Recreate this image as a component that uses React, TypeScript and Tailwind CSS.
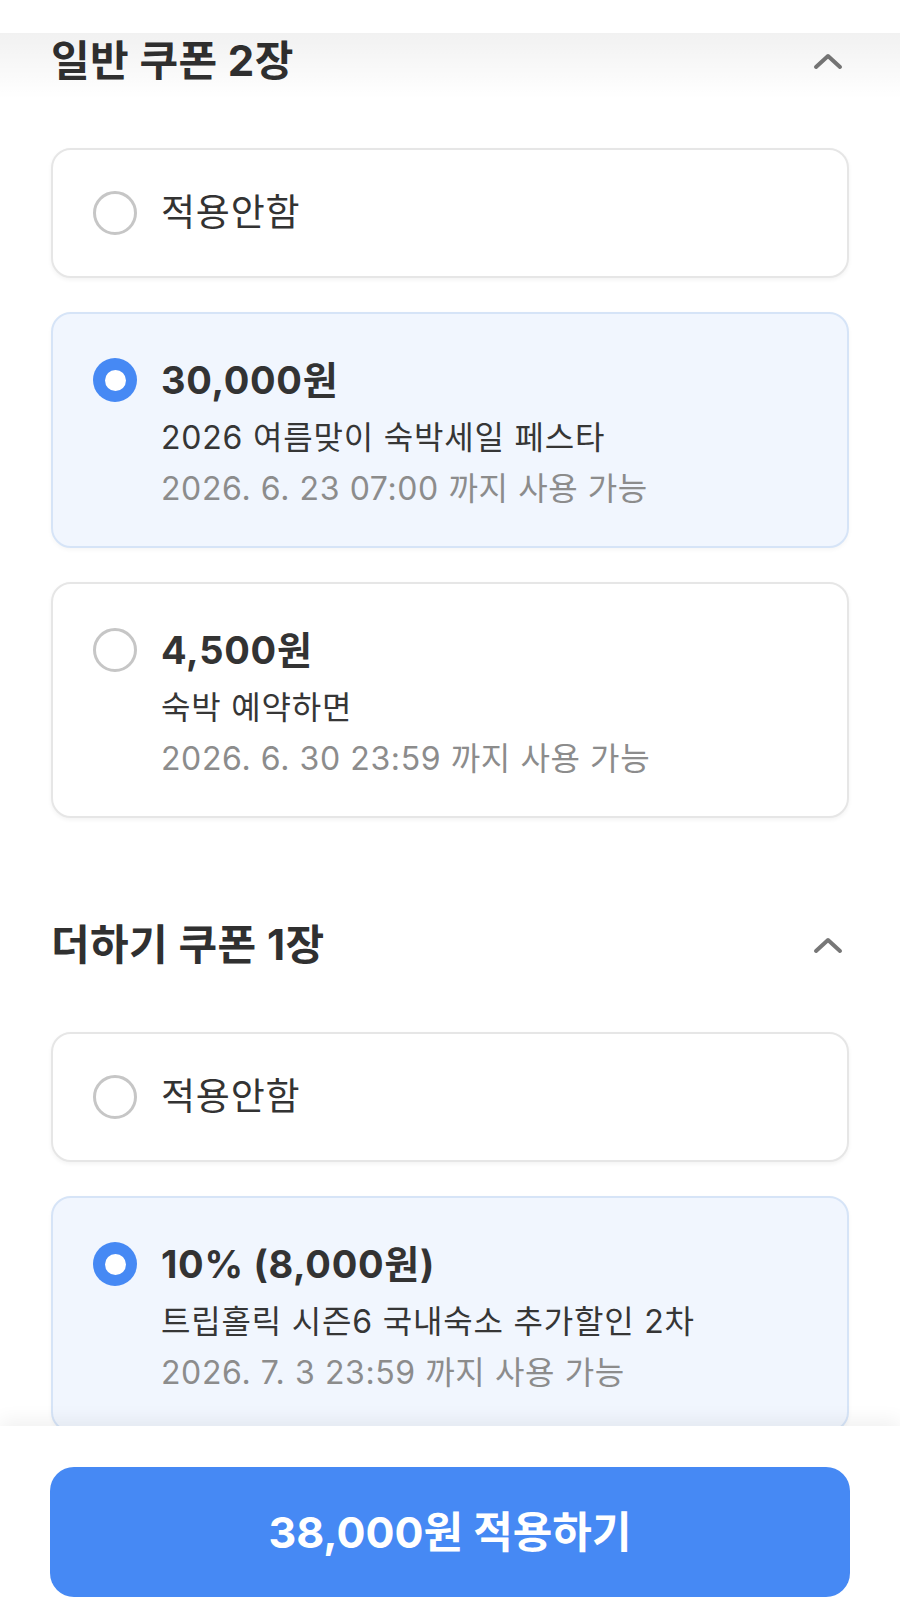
import React from "react";

type Coupon = {
  id: string;
  title?: string;
  name?: string;
  expiry?: string;
  selected?: boolean;
};

const Chevron = () => (
  <svg width="32" height="20" viewBox="0 0 32 20" className="mr-[5px]" aria-hidden>
    <path d="M4 16 L16 5 L28 16" fill="none" stroke="#777777" strokeWidth="4" strokeLinecap="round" strokeLinejoin="round" />
  </svg>
);

const Radio = ({ selected }: { selected?: boolean }) =>
  selected ? (
    <div className="w-[44px] h-[44px] rounded-full bg-[#4689f4] flex items-center justify-center shrink-0">
      <div className="w-[21px] h-[21px] rounded-full bg-white" />
    </div>
  ) : (
    <div className="w-[44px] h-[44px] rounded-full border-[3px] border-[#c6c6c6] bg-white shrink-0" />
  );

const NoneCard = () => (
  <div className="rounded-[20px] border-2 border-[#e6e6e6] bg-white shadow-[0_2px_4px_rgba(0,0,0,0.05)] pl-[40px] pr-[30px] py-[37px] flex items-center gap-[24px]">
    <Radio />
    <div className="text-[37px] leading-[52px] text-[#333333] tracking-[0.8px]">적용안함</div>
  </div>
);

const CouponCard = ({ c }: { c: Coupon }) => (
  <div
    className={
      c.selected
        ? "rounded-[20px] border-2 border-[#d6e4f7] bg-[#f1f6fe] shadow-[0_2px_4px_rgba(0,0,0,0.04)] pl-[40px] pr-[30px] pt-[40px] pb-[32px] flex items-start gap-[24px]"
        : "rounded-[20px] border-2 border-[#e6e6e6] bg-white shadow-[0_2px_4px_rgba(0,0,0,0.05)] pl-[40px] pr-[30px] pt-[40px] pb-[32px] flex items-start gap-[24px]"
    }
  >
    <div className="mt-[4px]">
      <Radio selected={c.selected} />
    </div>
    <div className="flex flex-col">
      <div className="text-[38px] leading-[52px] font-bold text-[#333333] tracking-[0.7px]">{c.title}</div>
      <div className="mt-[6px] text-[32px] leading-[51px] text-[#363636] tracking-[0.8px]">{c.name}</div>
      <div className="text-[32px] leading-[51px] text-[#8c8c8c] tracking-[0.6px]">{c.expiry}</div>
    </div>
  </div>
);

const SectionHeader = ({ title }: { title: string }) => (
  <div className="h-[52px] flex items-center justify-between">
    <div className="text-[42px] leading-[52px] font-bold text-[#303030] tracking-[0.4px]">{title}</div>
    <Chevron />
  </div>
);

export default function App() {
  const general: Coupon[] = [
    { id: "a", title: "30,000원", name: "2026 여름맞이 숙박세일 페스타", expiry: "2026. 6. 23 07:00 까지 사용 가능", selected: true },
    { id: "b", title: "4,500원", name: "숙박 예약하면", expiry: "2026. 6. 30 23:59 까지 사용 가능" },
  ];
  const plus: Coupon[] = [
    { id: "c", title: "10% (8,000원)", name: "트립홀릭 시즌6 국내숙소 추가할인 2차", expiry: "2026. 7. 3 23:59 까지 사용 가능", selected: true },
  ];

  return (
    <div
      className="relative w-[900px] h-[1618px] overflow-hidden bg-white"
      style={{ fontFamily: 'Inter, "Noto Sans CJK KR", "Noto Sans", sans-serif' }}
    >
      <div className="h-[33px] bg-white" />
      <div className="px-[51px] pt-[2px]">
        <section>
          <SectionHeader title="일반 쿠폰 2장" />
          <div className="mt-[61px] flex flex-col gap-[34px]">
            <NoneCard />
            {general.map((c) => (
              <CouponCard key={c.id} c={c} />
            ))}
          </div>
        </section>
        <section className="mt-[101px]">
          <SectionHeader title="더하기 쿠폰 1장" />
          <div className="mt-[61px] flex flex-col gap-[34px]">
            <NoneCard />
            {plus.map((c) => (
              <CouponCard key={c.id} c={c} />
            ))}
          </div>
        </section>
      </div>

      {/* shadow under top bar */}
      <div className="pointer-events-none absolute left-0 right-0 top-[33px] h-[66px] bg-gradient-to-b from-black/[0.055] to-transparent" />

      {/* bottom action bar */}
      <div className="absolute left-0 right-0 bottom-0 h-[192px] bg-white shadow-[0_-6px_18px_rgba(0,0,0,0.06)] px-[50px] pt-[41px]">
        <button className="w-full h-[130px] rounded-[24px] bg-[#4689f4] text-white text-[43px] font-bold flex items-center justify-center">
          38,000원 적용하기
        </button>
      </div>
    </div>
  );
}
